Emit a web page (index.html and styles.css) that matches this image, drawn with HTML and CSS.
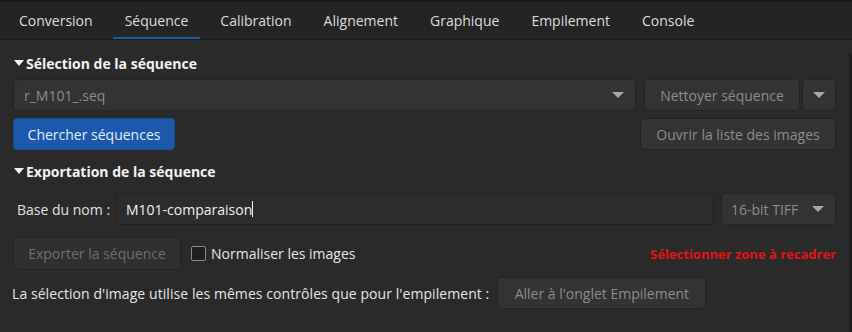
FILE: index.html
```html
<!DOCTYPE html>
<html lang="fr">

<head>
    <meta charset="UTF-8">
    <meta name="viewport" content="width=device-width, initial-scale=1.0">
    <title>Séquence</title>
    <link rel="stylesheet" href="styles.css">
</head>

<body>
    <!-- Onglets -->
    <div class="tabs">
        <div class="tab">Conversion</div>
        <div class="tab active">Séquence</div>
        <div class="tab">Calibration</div>
        <div class="tab">Alignement</div>
        <div class="tab">Graphique</div>
        <div class="tab">Empilement</div>
        <div class="tab">Console</div>
    </div>

    <div class="content">
        <div class="section-title first"><span class="caret"></span>Sélection de la séquence</div>

        <div class="row">
            <div class="combo grow">
                <span>r_M101_.seq</span>
                <span class="arrow"></span>
            </div>
            <div class="btn clean">Nettoyer séquence</div>
            <div class="btn arrow-btn"><span class="arrow"></span></div>
        </div>

        <div class="row r2">
            <div class="btn primary search">Chercher séquences</div>
            <div class="btn open-list">Ouvrir la liste des images</div>
        </div>

        <div class="section-title second"><span class="caret"></span>Exportation de la séquence</div>

        <div class="row r3">
            <label class="name-label">Base du nom :</label>
            <div class="input grow">M101-comparaison<span class="cursor"></span></div>
            <div class="combo format">
                <span>16-bit TIFF</span>
                <span class="arrow"></span>
            </div>
        </div>

        <div class="row r4">
            <div class="btn export">Exporter la séquence</div>
            <span class="check"></span>
            <span class="check-label">Normaliser les images</span>
            <span class="warning">Sélectionner zone à recadrer</span>
        </div>

        <div class="row r5">
            <span class="info">La sélection d'image utilise les mêmes contrôles que pour l'empilement :</span>
            <div class="btn goto">Aller à l'onglet Empilement</div>
        </div>
    </div>
</body>

</html>
```

FILE: styles.css
```css
body {
    margin: 0;
    font-family: 'Open Sans', 'Noto Sans', sans-serif;
    font-size: 14px;
    background-color: #2a2a2a;
    color: #e6e6e6;
    width: 852px;
    height: 332px;
    overflow: hidden;
}

/* Onglets */
.tabs {
    display: flex;
    gap: 8px;
    height: 37px;
    padding-left: 7px;
    background-color: #242424;
    border-top: 2px solid #1a1a1a;
    border-bottom: 1px solid #1c1c1c;
}

.tab {
    padding: 3px 12px 0;
    line-height: 32px;
    color: #dcdcdc;
    border-bottom: 2px solid transparent;
}

.tab.active {
    border-bottom-color: #1f5aa6;
}

.content {
    padding: 0 13px 0 13px;
    border-right: 3px solid #202020;
    height: 291px;
}

.section-title {
    display: flex;
    align-items: center;
    height: 20px;
    font-weight: bold;
    color: #f2f2f2;
}

.section-title.first {
    margin-top: 13px;
}

.section-title.second {
    margin-top: 11px;
}

.caret {
    width: 0;
    height: 0;
    margin: 0 2px 0 1px;
    border-left: 5px solid transparent;
    border-right: 5px solid transparent;
    border-top: 6px solid #f2f2f2;
}

.row {
    display: flex;
    align-items: center;
    margin-top: 6px;
}

.row.r2 {
    margin-top: 7px;
}

.row.r3 {
    margin-top: 12px;
}

.row.r4 {
    margin-top: 12px;
}

.row.r5 {
    margin-top: 7px;
}

.grow {
    flex: 1;
}

.btn,
.combo,
.input {
    box-sizing: border-box;
    height: 32px;
    display: flex;
    align-items: center;
    border-radius: 4px;
    border: 1px solid #242424;
    background-color: #333333;
    color: #8c8c8c;
}

.btn {
    justify-content: center;
}

.combo {
    justify-content: space-between;
    padding: 0 11px 0 10px;
}

.arrow {
    width: 0;
    height: 0;
    border-left: 6px solid transparent;
    border-right: 6px solid transparent;
    border-top: 6px solid #a8a8a8;
}

.clean {
    width: 156px;
    margin-left: 8px;
}

.arrow-btn {
    width: 34px;
    margin-left: 2px;
}

.primary {
    background-color: #1c59ad;
    border-color: #1a4f98;
    color: #e4ebf6;
}

.search {
    width: 162px;
}

.open-list {
    width: 196px;
    margin-left: auto;
}

.name-label {
    padding-left: 4px;
    width: 99px;
    color: #e0e0e0;
}

.input {
    padding-left: 9px;
    background-color: #2c2c2c;
    border-color: #222222;
    color: #f0f0f0;
}

.cursor {
    width: 1px;
    height: 16px;
    background-color: #f0f0f0;
}

.format {
    width: 115px;
    margin-left: 7px;
    padding-left: 9px;
}

.export {
    width: 168px;
    height: 33px;
    background-color: #2f2f2f;
    color: #6f6f6f;
}

.check {
    box-sizing: border-box;
    width: 15px;
    height: 15px;
    margin-left: 10px;
    border: 1px solid #8a8a8a;
    border-radius: 2px;
    background-color: #1e1e1e;
}

.check-label {
    margin-left: 5px;
    color: #e6e6e6;
}

.warning {
    margin-left: auto;
    color: #e31414;
    font-weight: bold;
    font-size: 13px;
}

.info {
    color: #e6e6e6;
    margin-left: -1px;
    letter-spacing: 0.07px;
}

.goto {
    width: 209px;
    margin-left: 8px;
}
```
